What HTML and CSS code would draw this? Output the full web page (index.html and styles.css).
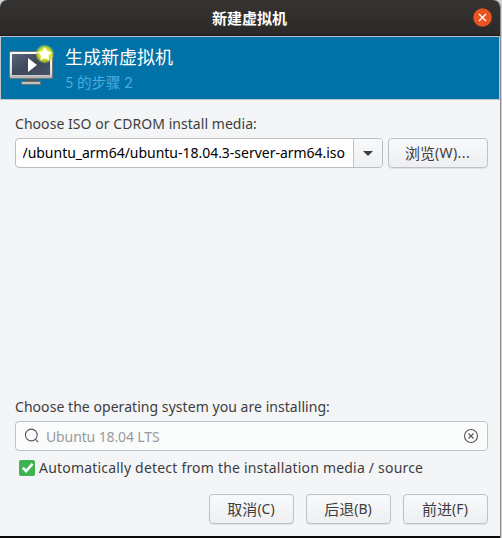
FILE: index.html
```html
<!DOCTYPE html>
<html lang="zh-CN">
<head>
    <meta charset="UTF-8">
    <meta name="viewport" content="width=device-width, initial-scale=1.0">
    <title>新建虚拟机</title>
    <link rel="stylesheet" href="styles.css">
</head>
<body>
    <div class="window">
        <div class="titlebar">
            <span class="title">新建虚拟机</span>
            <button class="close" aria-label="Close">
                <svg width="19" height="19" viewBox="0 0 19 19">
                    <circle cx="9.5" cy="9.5" r="9.3" fill="#e95420"/>
                    <path d="M6 6l7 7M13 6l-7 7" stroke="#fff" stroke-width="1.4"/>
                </svg>
            </button>
        </div>

        <div class="banner">
            <svg class="vm-icon" width="48" height="44" viewBox="0 0 48 44">
                <defs>
                    <linearGradient id="frame" x1="0" y1="0" x2="0" y2="1">
                        <stop offset="0" stop-color="#ffffff"/>
                        <stop offset="0.8" stop-color="#dcdcdc"/>
                        <stop offset="1" stop-color="#aaaaaa"/>
                    </linearGradient>
                    <linearGradient id="screen" x1="0" y1="0" x2="1" y2="1">
                        <stop offset="0" stop-color="#59657a"/>
                        <stop offset="0.5" stop-color="#3d485b"/>
                        <stop offset="1" stop-color="#465267"/>
                    </linearGradient>
                    <radialGradient id="glow">
                        <stop offset="0.45" stop-color="#f0f428"/>
                        <stop offset="0.75" stop-color="#c7dc24" stop-opacity="0.8"/>
                        <stop offset="1" stop-color="#b5d33d" stop-opacity="0"/>
                    </radialGradient>
                </defs>
                <path d="M18 34h12v4H18z" fill="#555759"/>
                <rect x="13.5" y="37.5" width="19" height="3" rx="0.5" fill="#bfc0c0" stroke="#6d7174"/>
                <rect x="1.5" y="7.5" width="43" height="27" rx="1.5" fill="url(#frame)" stroke="#77797b"/>
                <rect x="4" y="10" width="38" height="21" fill="url(#screen)"/>
                <path d="M20 14l9 7-9 7z" fill="#fff"/>
                <circle cx="36.8" cy="10" r="9.8" fill="url(#glow)"/>
                <path d="M36.8 2.8l2.2 4.5 5 .7-3.6 3.5.9 5-4.5-2.4-4.5 2.4.9-5L29.6 8l5-.7z" fill="#fff"/>
            </svg>
            <div class="banner-text">
                <div class="heading">生成新虚拟机</div>
                <div class="step">5 的步骤 2</div>
            </div>
        </div>

        <div class="content">
            <label class="label media-label">Choose ISO or CDROM install media:</label>
            <div class="media-row">
                <div class="combo">
                    <div class="path"><span>/ubuntu_arm64/ubuntu-18.04.3-server-arm64.iso</span></div>
                    <div class="arrow">
                        <svg width="10" height="5" viewBox="0 0 10 5"><path d="M0 0h10L5 5z" fill="#3d3d3d"/></svg>
                    </div>
                </div>
                <button class="btn browse"><span class="cn">浏览</span><span class="key">(W)...</span></button>
            </div>

            <label class="label os-label">Choose the operating system you are installing:</label>
            <div class="search">
                <svg width="16" height="16" viewBox="0 0 16 16" fill="none" stroke="#555" stroke-width="1.1">
                    <circle cx="7.3" cy="7" r="5.9"/>
                    <path d="M11.2 11.2l3 3"/>
                </svg>
                <span class="os-name">Ubuntu 18.04 LTS</span>
                <svg width="16" height="16" viewBox="0 0 16 16" fill="none" stroke="#555" stroke-width="1.1">
                    <circle cx="8" cy="8" r="6.5"/>
                    <path d="M5.5 5.5l5 5M10.5 5.5l-5 5"/>
                </svg>
            </div>
            <div class="detect">
                <svg width="16" height="16" viewBox="0 0 16 16">
                    <rect width="16" height="16" rx="2" fill="#3eb34f"/>
                    <path d="M3.8 7.6l3.3 3.5 6.5-7.3" fill="none" stroke="#fff" stroke-width="2.5"/>
                </svg>
                <span class="label detect-label">Automatically detect from the installation media / source</span>
            </div>

            <div class="actions">
                <button class="btn"><span class="cn">取消</span><span class="key">(C)</span></button>
                <button class="btn"><span class="cn">后退</span><span class="key">(B)</span></button>
                <button class="btn"><span class="cn">前进</span><span class="key">(F)</span></button>
            </div>
        </div>
    </div>
</body>
</html>
```
FILE: styles.css
```css
body {
    margin: 0;
    height: 538px;
    overflow: hidden;
    background-color: #d0d1d2;
    color: #3d3d3d;
    font-family: "Noto Sans", "Noto Sans CJK SC", sans-serif;
    font-size: 14px;
}
.window {
    display: flex;
    flex-direction: column;
    width: 500px;
    height: 538px;
    box-sizing: border-box;
    background-color: #f4f5f7;
    border-bottom: 2px solid #0b0a0a;
    border-radius: 7px 7px 0 0;
    box-shadow: 1px 0 0 #8d8d8d;
}
.titlebar {
    display: grid;
    grid-template-columns: 1fr auto 1fr;
    align-items: center;
    height: 36px;
    box-sizing: border-box;
    padding: 0 8px;
    background: linear-gradient(#353432, #2c2a29);
    border-bottom: 1px solid #1b1a1a;
    border-radius: 7px 7px 0 0;
}
.title {
    grid-column: 2;
    padding-right: 1px;
    color: #fff;
    font-family: "Noto Sans CJK SC", sans-serif;
    font-size: 15px;
    font-weight: bold;
    line-height: 20px;
}
.close {
    justify-self: end;
    width: 19px;
    height: 19px;
    margin-bottom: 1px;
    padding: 0;
    border: none;
    background: none;
}
.close svg {
    display: block;
}
.banner {
    display: flex;
    height: 64px;
    box-sizing: border-box;
    padding: 7px 7px 0;
    background-color: #0072a8;
    border: 1px solid #c0c5ca;
}
.banner-text {
    margin-left: 9px;
    font-family: Lato, "Noto Sans CJK SC", sans-serif;
}
.heading {
    color: #fff;
    font-size: 18px;
    line-height: 27px;
}
.step {
    color: #4eaadc;
    font-size: 14.5px;
    line-height: 24px;
}
.content {
    display: flex;
    flex-direction: column;
    flex-grow: 1;
    padding: 14px 12px 12px 15px;
}
.label {
    line-height: 20px;
    letter-spacing: 0.05px;
    white-space: nowrap;
}
.media-row {
    display: flex;
    gap: 5px;
    margin-top: 4px;
}
.combo {
    display: flex;
    width: 368px;
    height: 30px;
    box-sizing: border-box;
    border: 1px solid #b9bdc4;
    border-radius: 4px;
    background-color: #fff;
    overflow: hidden;
}
.path {
    display: flex;
    justify-content: flex-end;
    width: 322px;
    margin-left: 7px;
    color: #000;
    line-height: 28px;
    letter-spacing: -0.02px;
    white-space: nowrap;
    overflow: hidden;
}
.arrow {
    display: flex;
    flex-grow: 1;
    align-items: center;
    justify-content: center;
    margin-left: 8px;
    border-left: 1px solid #c1c4ca;
    background: linear-gradient(#f8f9fa, #eff0f2);
}
.btn {
    display: flex;
    align-items: center;
    justify-content: center;
    width: 85px;
    height: 30px;
    box-sizing: border-box;
    padding: 0 1px 1px 0;
    color: #3d3d3d;
    font-family: "Noto Sans", "Noto Sans CJK SC", sans-serif;
    font-size: 14px;
    border: 1px solid #bec1c7;
    border-radius: 4px;
    background: linear-gradient(#f8f9fa, #eeeff1);
    box-shadow: 0 1px 1px rgba(0, 0, 0, 0.08);
}
.cn {
    font-family: "Noto Sans CJK SC", sans-serif;
    font-size: 15px;
}
.browse {
    width: 100px;
}
.browse .key {
    letter-spacing: 0.4px;
}
.os-label {
    margin-top: 229px;
}
.search {
    display: flex;
    align-items: center;
    height: 30px;
    margin-top: 4px;
    padding: 0 8px;
    box-sizing: border-box;
    border: 1px solid #bec1c7;
    border-radius: 4px;
    background-color: #fafcfb;
}
.os-name {
    flex-grow: 1;
    margin-left: 6px;
    color: #9a9a9a;
    letter-spacing: -0.12px;
}
.detect {
    display: flex;
    align-items: center;
    gap: 4px;
    margin: 7px 0 0 4px;
}
.detect-label {
    letter-spacing: 0.2px;
}
.actions {
    display: flex;
    justify-content: flex-end;
    gap: 12px;
    margin-top: 16px;
}
```
